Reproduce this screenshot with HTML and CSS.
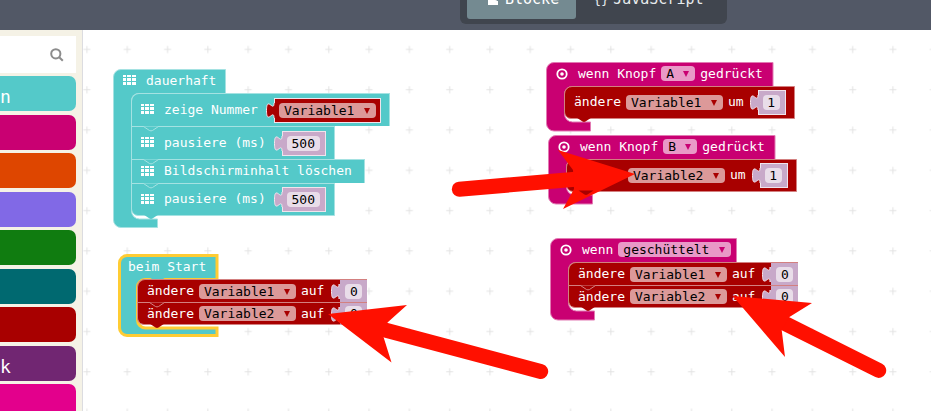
FILE: index.html
```
<!DOCTYPE html>
<html lang="de">
<head>
<meta charset="utf-8">
<meta name="viewport" content="width=device-width, initial-scale=1">
<title>Editor</title>
<link rel="stylesheet" href="styles.css">
</head>
<body>
<svg class="defs" aria-hidden="true">
  <symbol id="grid" viewBox="0 0 13 10">
    <path d="M0 0h3v2H0zM4 0h4v2H4zM9 0h4v2H9zM0 3h3v3H0zM4 3h4v3H4zM9 3h4v3H9zM0 7h3v3H0zM4 7h4v3H4zM9 7h4v3H9z"/>
  </symbol>
  <symbol id="target" viewBox="0 0 12 12">
    <circle cx="6" cy="6" r="4.7" fill="none" stroke="currentColor" stroke-width="1.8"/>
    <circle cx="6" cy="6" r="1.8"/>
  </symbol>
  <symbol id="tab" viewBox="0 0 16 6">
    <path d="M0.5 0.5l6 4q1.500 .8 3 0l6-4"/>
  </symbol>
  <symbol id="plug" viewBox="0 0 9 15">
    <path d="M9 0H8c0 10-7.500-8-7.500 7.500S8 5 8 15h1z" stroke="none"/>
    <path d="M8 0c0 10-7.500-8-7.500 7.500S8 5 8 15" fill="none" stroke="#f5e6ee"/>
  </symbol>
</svg>

<header class="topbar">
  <nav class="switcher">
    <button class="mode mode-active" type="button">
      <svg class="mode-icon" viewBox="0 0 10 12"><path d="M0 0h5v5q0 2 2 2t2 1h1v4H0z"/></svg>Blöcke
    </button>
    <button class="mode" type="button"><span class="braces">{}</span>JavaScript</button>
  </nav>
</header>

<main class="editor">
  <aside class="toolbox">
    <label class="search">
      <input type="search" aria-label="Suche">
      <svg class="search-icon" viewBox="0 0 14 14"><circle cx="5.800" cy="5.800" r="4.600"/><path d="M9.200 9.200l3.600 3.600"/></svg>
    </label>
    <button class="category c-basic" type="button">n</button>
    <button class="category c-input" type="button" aria-label="Eingabe"></button>
    <button class="category c-music" type="button" aria-label="Musik"></button>
    <button class="category c-led" type="button" aria-label="LED"></button>
    <button class="category c-loops" type="button" aria-label="Schleifen"></button>
    <button class="category c-logic" type="button" aria-label="Logik"></button>
    <button class="category c-variables" type="button" aria-label="Variablen"></button>
    <button class="category c-math" type="button">k</button>
    <button class="category c-radio" type="button" aria-label="Funk"></button>
  </aside>

  <section class="workspace">
    <svg class="crosses" aria-hidden="true">
      <defs>
        <pattern id="cross" width="40.3" height="40.3" patternUnits="userSpaceOnUse" x="-16.500" y="-1">
          <path d="M17 20.500h7M20.500 17v7" stroke="#e3e3e3" fill="none"/>
        </pattern>
      </defs>
      <rect width="100%" height="100%" fill="url(#cross)"/>
    </svg>

    <div class="event basic at-forever">
      <svg class="frame" width="114" height="160"><path d="M.5 8A7.500 7.500 0 0 1 8 .5H112.500V24.500H46l-6 4q-1.500 .8-3 0l-6-4H26a7.500 7.500 0 0 0-7.500 7.500V142a8 8 0 0 0 8 8H44.500V158.500H8A7.500 7.500 0 0 1 .5 151z"/></svg>
      <div class="head"><svg class="icon"><use href="#grid"/></svg>dauerhaft</div>
      <div class="stack">
        <div class="stmt basic tall"><svg class="icon"><use href="#grid"/></svg>zeige Nummer
          <span class="value var"><svg class="plug"><use href="#plug"/></svg>
            <span class="drop"><select aria-label="Variable"><option>Variable1</option></select></span></span>
          <svg class="tab"><use href="#tab"/></svg></div>
        <div class="stmt basic tall"><svg class="icon"><use href="#grid"/></svg>pausiere (ms)
          <span class="value num"><svg class="plug"><use href="#plug"/></svg><input class="wide" value="500" aria-label="Millisekunden"></span>
          <svg class="tab"><use href="#tab"/></svg></div>
        <div class="stmt basic mid"><svg class="icon"><use href="#grid"/></svg>Bildschirminhalt löschen
          <svg class="tab"><use href="#tab"/></svg></div>
        <div class="stmt basic tall"><svg class="icon"><use href="#grid"/></svg>pausiere (ms)
          <span class="value num"><svg class="plug"><use href="#plug"/></svg><input class="wide" value="500" aria-label="Millisekunden"></span>
          <svg class="tab"><use href="#tab"/></svg></div>
      </div>
    </div>

    <div class="event basic selected at-start">
      <svg class="frame" width="99" height="82"><path d="M.5 8A7.500 7.500 0 0 1 8 .5H98V24.500H46l-6 4q-1.500 .8-3 0l-6-4H26a7.500 7.500 0 0 0-7.500 7.500V65a8 8 0 0 0 8 8H98V80.500H8A7.500 7.500 0 0 1 .5 73z"/></svg>
      <div class="head">beim Start</div>
      <div class="stack">
        <div class="stmt vars short">ändere
          <span class="drop"><select aria-label="Variable"><option>Variable1</option></select></span>auf
          <span class="value num flush"><svg class="plug"><use href="#plug"/></svg><input value="0" aria-label="Wert"></span>
          <svg class="tab"><use href="#tab"/></svg></div>
        <div class="stmt vars short">ändere
          <span class="drop"><select aria-label="Variable"><option>Variable2</option></select></span>auf
          <span class="value num flush"><svg class="plug"><use href="#plug"/></svg><input value="0" aria-label="Wert"></span>
          <svg class="tab"><use href="#tab"/></svg></div>
      </div>
    </div>

    <div class="event input at-button-a">
      <svg class="frame" width="228" height="70"><path d="M.5 8A7.500 7.500 0 0 1 8 .5H227V24.500H46l-6 4q-1.500 .8-3 0l-6-4H26a7.500 7.500 0 0 0-7.500 7.500V52a8 8 0 0 0 8 8H44.500V69H8A7.500 7.500 0 0 1 .5 61.500z"/></svg>
      <div class="head"><svg class="icon round"><use href="#target"/></svg>wenn Knopf
        <span class="drop pink"><select aria-label="Knopf"><option>A</option></select></span>gedrückt</div>
      <div class="stack">
        <div class="stmt vars tall">ändere
          <span class="drop"><select aria-label="Variable"><option>Variable1</option></select></span>um
          <span class="value num"><svg class="plug"><use href="#plug"/></svg><input value="1" aria-label="Wert"></span>
          <svg class="tab"><use href="#tab"/></svg></div>
      </div>
    </div>

    <div class="event input at-button-b">
      <svg class="frame" width="228" height="70"><path d="M.5 8A7.500 7.500 0 0 1 8 .5H227V24.500H46l-6 4q-1.500 .8-3 0l-6-4H26a7.500 7.500 0 0 0-7.500 7.500V52a8 8 0 0 0 8 8H44.500V69H8A7.500 7.500 0 0 1 .5 61.500z"/></svg>
      <div class="head"><svg class="icon round"><use href="#target"/></svg>wenn Knopf
        <span class="drop pink"><select aria-label="Knopf"><option>B</option></select></span>gedrückt</div>
      <div class="stack">
        <div class="stmt vars tall">ändere
          <span class="drop"><select aria-label="Variable"><option>Variable2</option></select></span>um
          <span class="value num"><svg class="plug"><use href="#plug"/></svg><input value="1" aria-label="Wert"></span>
          <svg class="tab"><use href="#tab"/></svg></div>
      </div>
    </div>

    <div class="event input at-shake">
      <svg class="frame" width="188" height="83"><path d="M.5 8A7.500 7.500 0 0 1 8 .5H186.500V24.500H46l-6 4q-1.500 .8-3 0l-6-4H26a7.500 7.500 0 0 0-7.500 7.500V65a8 8 0 0 0 8 8H44.500V82H8A7.500 7.500 0 0 1 .5 74.500z"/></svg>
      <div class="head"><svg class="icon round"><use href="#target"/></svg>wenn
        <span class="drop pink"><select aria-label="Geste"><option>geschüttelt</option></select></span></div>
      <div class="stack">
        <div class="stmt vars short">ändere
          <span class="drop"><select aria-label="Variable"><option>Variable1</option></select></span>auf
          <span class="value num flush"><svg class="plug"><use href="#plug"/></svg><input value="0" aria-label="Wert"></span>
          <svg class="tab"><use href="#tab"/></svg></div>
        <div class="stmt vars short">ändere
          <span class="drop"><select aria-label="Variable"><option>Variable2</option></select></span>auf
          <span class="value num flush"><svg class="plug"><use href="#plug"/></svg><input value="0" aria-label="Wert"></span>
          <svg class="tab"><use href="#tab"/></svg></div>
      </div>
    </div>

    <svg class="arrows" viewBox="83 30 848 381" width="848" height="381" aria-hidden="true">
      <path class="shaft" d="M385 330L540.700 371.400M590 178L459.300 189.200M785 323.500L878.700 370.400"/>
      <path d="M328 314L407 305L387.500 322.500L383.500 337L391.500 362.500Z"/>
      <path d="M635 174L558 150L573 170L574 189L563 209Z"/>
      <path d="M732.700 296L812 303L789 317.300L781.700 330L785 357Z"/>
    </svg>
  </section>
</main>
</body>
</html>
```
FILE: styles.css
```
* { box-sizing: border-box; }

body {
  margin: 0;
  height: 100vh;
  display: flex;
  flex-direction: column;
  overflow: hidden;
  background: #fff;
  font-family: "DejaVu Sans Mono", monospace;
  font-size: 13px;
}

button, input, select { font: inherit; color: inherit; border: 0; margin: 0; padding: 0; }
svg { flex: none; display: block; }
.defs { position: absolute; width: 0; height: 0; }

/* top bar */
.topbar {
  flex: none;
  height: 30px;
  padding: 0 0 6px 460px;
  display: flex;
  align-items: flex-end;
  overflow: hidden;
  background: #525866;
}
.switcher {
  display: flex;
  padding: 5px 7px;
  border-radius: 6px;
  background: #40454e;
}
.mode {
  display: flex;
  align-items: center;
  height: 40px;
  padding: 0 16px 0 17px;
  background: none;
  color: #e6eaec;
  font-size: 15px;
  white-space: nowrap;
}
.mode-active { padding: 0 17px 0 21px; border-radius: 3px; background: #748a91; color: #fff; }
.mode-icon { width: 10px; height: 12px; margin-right: 7px; fill: #fff; }
.braces { width: 20px; font-size: 13px; text-align: left; }

/* toolbox */
.editor { flex: 1; min-height: 0; display: flex; }
.toolbox {
  flex: none;
  width: 83px;
  padding: 6px 6px 0 0;
  overflow: hidden;
  background: #f5f2e6;
  border-right: 1px solid #dcdce0;
}
.search { display: flex; align-items: center; height: 37px; margin-bottom: 3px; padding-right: 12px; background: #fff; }
.search input { flex: 1; min-width: 0; background: none; outline: 0; appearance: none; }
.search-icon { width: 14px; height: 14px; fill: none; stroke: #8c8c8c; stroke-width: 2; }
.category {
  display: block;
  width: 100%;
  height: 35px;
  margin-bottom: 3px;
  border-radius: 0 7px 7px 0;
  color: #fff;
  font-size: 18px;
  line-height: 42px;
  text-align: left;
}
.category:nth-child(even) { margin-bottom: 4px; }
.c-basic { background: #54c9c9; }
.c-input { background: #c90072; }
.c-music { background: #de4600; }
.c-led { background: #8169e6; }
.c-loops { background: #107c10; }
.c-logic { background: #006970; }
.c-variables { background: #a80000; }
.c-math { background: #712672; }
.c-radio { background: #e3008c; }

/* workspace */
.workspace { position: relative; flex: 1; min-width: 0; overflow: hidden; }
.crosses { position: absolute; inset: 0; width: 100%; height: 100%; }
.arrows { position: absolute; left: 0; top: 0; fill: #ff1000; pointer-events: none; }
.shaft { stroke: #ff1000; stroke-width: 15; stroke-linecap: round; }

.event { position: absolute; color: #fff; white-space: nowrap; }
.at-forever { left: 30px; top: 39px; }
.at-start { left: 36px; top: 225px; }
.at-button-a { left: 463px; top: 32px; }
.at-button-b { left: 465px; top: 105px; }
.at-shake { left: 467px; top: 208px; }

.frame { position: absolute; left: 0; top: 0; overflow: visible; }
.basic { --fill: #54c9c9; --edge: #a5e2e2; }
.input { --fill: #c90072; --edge: #e27ab3; }
.vars { --fill: #a80000; --edge: #d38080; }
.frame path { fill: var(--fill); stroke: var(--edge); }
.selected .frame path { stroke: #fc3; stroke-width: 3; }

.head { position: relative; display: flex; align-items: center; height: 24px; padding: 0 9px 2px 10px; }
.selected .head { padding-left: 9px; }
.icon { width: 13px; height: 10px; margin-right: 10px; fill: #fff; }
.icon.round { width: 12px; height: 12px; margin-top: 2px; }

.stack { position: relative; padding-left: 18px; display: flex; flex-direction: column; align-items: flex-start; }
.stmt {
  position: relative;
  display: flex;
  align-items: center;
  padding: 0 8px 2px 9px;
  background: var(--fill);
  border: 1px solid var(--edge);
  border-bottom-width: 0;
}
.stmt:first-child { border-top-left-radius: 8px; }
.stmt:last-child { border-bottom-left-radius: 7px; border-bottom-width: 1px; }
.tall { height: 33px; }
.mid { height: 24px; padding-right: 12px; }
.short { height: 23px; padding-right: 0; padding-bottom: 1px; border-right: 0; }
.tab { position: absolute; left: 11px; bottom: -6px; width: 16px; height: 6px; z-index: 1; fill: var(--fill); stroke: var(--edge); }
.stmt:last-child > .tab { stroke: none; bottom: -5px; }

.drop { position: relative; display: flex; margin: 1px 5px 0 5px; }
.drop select {
  height: 15px;
  padding: 0 21px 0 5px;
  border-radius: 4px;
  appearance: none;
  background: #dc9999;
  color: #000;
  line-height: 15px;
}
.drop::after {
  content: "";
  position: absolute;
  right: 6px;
  top: 5px;
  border: 3px solid transparent;
  border-top: 6px solid #a80000;
  border-bottom: 0;
}
.drop.pink select { background: #e999c7; }
.drop.pink::after { border-top-color: #c90072; }
.at-shake .head { padding-right: 0; }

.value {
  position: relative;
  display: flex;
  align-items: center;
  height: 25px;
  margin: 2px 0 0 16px;
  padding: 0 5px 0 4px;
  background: var(--block);
  border: 1px solid #f0e4ec;
}
.num { --block: #c8a9c9; }
.var { --block: #a80000; padding: 0 4px; }
.var .drop { margin: 0; }
.input .tall .value { margin-left: 14px; }
.flush { height: 22px; border-width: 0; padding: 0 5px; margin-top: 1px; }
.plug { position: absolute; left: -9px; top: 4px; width: 9px; height: 15px; fill: var(--block); }
.value input {
  width: 17px;
  height: 15px;
  border-radius: 4px;
  background: #e9dde9;
  color: #000;
  text-align: center;
}
.value .wide { width: 33px; }
```
